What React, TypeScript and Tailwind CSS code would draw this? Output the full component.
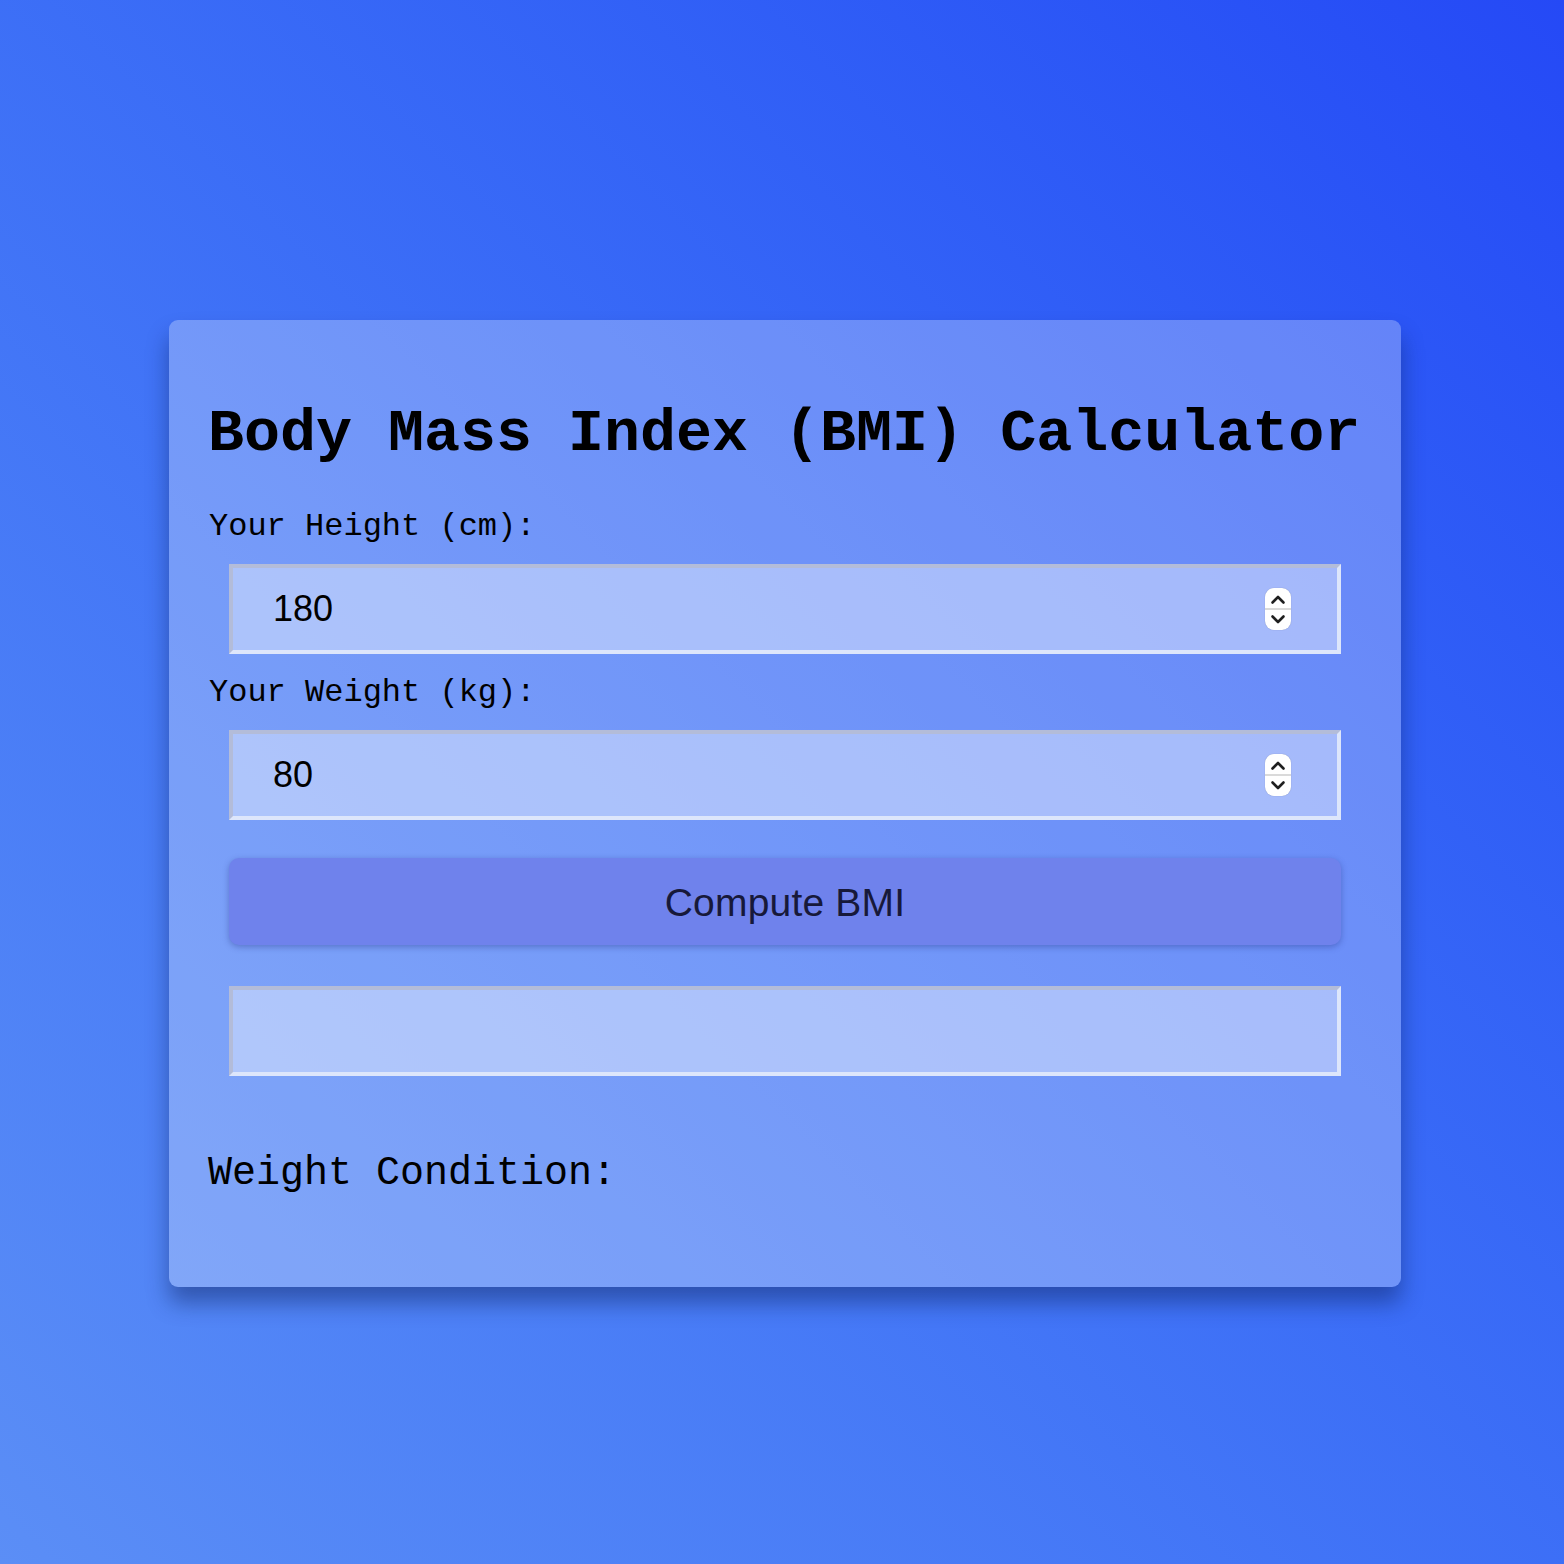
import React from "react"

function Spinner() {
  return (
    <div className="absolute right-[50px] top-1/2 -translate-y-1/2 flex h-[42px] w-[26px] flex-col overflow-hidden rounded-[9px] bg-white shadow-[0_0_1px_rgba(0,0,0,0.3)]">
      <div className="flex flex-1 items-center justify-center pt-[2px]">
        <svg width="16" height="11" viewBox="0 0 16 11" fill="none">
          <path d="M2.5 8.5L8 3l5.5 5.5" stroke="#1f1f1f" strokeWidth="2.6" strokeLinecap="round" strokeLinejoin="round" />
        </svg>
      </div>
      <div className="h-[2px] bg-[#dadada]" />
      <div className="flex flex-1 items-center justify-center pb-[2px]">
        <svg width="16" height="11" viewBox="0 0 16 11" fill="none">
          <path d="M2.5 2.5L8 8l5.5-5.5" stroke="#1f1f1f" strokeWidth="2.6" strokeLinecap="round" strokeLinejoin="round" />
        </svg>
      </div>
    </div>
  )
}

function NumberField({ value }: { value: string }) {
  return (
    <div className="relative mx-[60px]">
      <input
        type="number"
        defaultValue={value}
        className="block h-[90px] w-full border-4 border-t-[#b3bcd9] border-l-[#b3bcd9] border-b-[#dde6fb] border-r-[#dde6fb] bg-white/40 pl-[40px] text-[36px] text-black outline-none [appearance:textfield] [&::-webkit-inner-spin-button]:appearance-none [&::-webkit-outer-spin-button]:appearance-none"
        style={{ fontFamily: '"Liberation Sans", Arial, sans-serif' }}
      />
      <Spinner />
    </div>
  )
}

export default function App() {
  const mono = { fontFamily: '"Liberation Mono", "Courier New", monospace' }
  return (
    <div className="min-h-screen w-full bg-linear-to-tr from-[#5b8ef6] to-[#2549f6] pt-[320px] pl-[6px]">
      <div className="mx-auto w-[1232px] rounded-[9px] bg-white/[0.27] pt-[78px] pb-[89px] shadow-[0_16px_22px_rgba(10,30,90,0.45)]">
        <h1 className="pl-[39px] text-[60px] font-bold leading-[72px] text-black" style={mono}>
          Body Mass Index (BMI) Calculator
        </h1>

        <label className="mt-[38px] block pl-[40px] text-[32px] leading-[38px] text-black" style={mono}>
          Your Height (cm):
        </label>
        <div className="mt-[18px]">
          <NumberField value="180" />
        </div>

        <label className="mt-[20px] block pl-[40px] text-[32px] leading-[38px] text-black" style={mono}>
          Your Weight (kg):
        </label>
        <div className="mt-[18px]">
          <NumberField value="80" />
        </div>

        <div className="mx-[60px] mt-[38px]">
          <button
            className="block h-[87px] w-full rounded-[10px] bg-[#6f82ec] pt-[3px] text-[39px] tracking-[0.2px] text-[#17193a] shadow-[0_2px_6px_rgba(30,40,120,0.35)]"
            style={{ fontFamily: '"Liberation Sans", Arial, sans-serif' }}
          >
            Compute BMI
          </button>
        </div>

        <div className="mx-[60px] mt-[41px] h-[90px] border-4 border-t-[#b3bcd9] border-l-[#b3bcd9] border-b-[#dde6fb] border-r-[#dde6fb] bg-white/40" />

        <p className="mt-[74px] pl-[39px] text-[40px] leading-[48px] text-black" style={mono}>
          Weight Condition:
        </p>
      </div>
    </div>
  )
}
